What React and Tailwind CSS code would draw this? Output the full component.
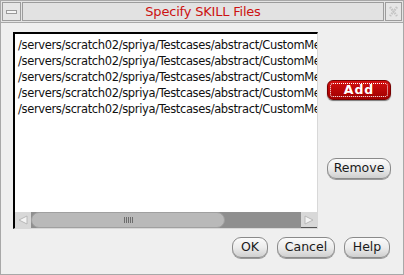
const FILES = Array(5).fill('/servers/scratch02/spriya/Testcases/abstract/CustomMenu.il');

function Btn({ children, w }) {
  return (
    <button
      className={`h-[21px] ${w} rounded-[9px] border border-[#8a8a8a] bg-gradient-to-b from-[#fbfbfb] via-[#ececec] to-[#cfcfcf] text-[12.5px] leading-none text-[#1a1a1a] shadow-[0_1px_0_#9a9a9a]`}
    >
      {children}
    </button>
  );
}

export default function App() {
  return (
    <div
      className="w-[404px] h-[275px] bg-[#efefef] border border-[#a8a8a8] flex flex-col overflow-hidden"
      style={{ fontFamily: '"DejaVu Sans", "Noto Sans", sans-serif' }}
    >
      <div className="h-[22px] flex items-stretch gap-[1px] p-[1px] border-b border-[#a8a8a8] bg-[#e4e4e4]">
        <div className="w-[19px] border border-[#9c9c9c] bg-[#e6e6e6] flex items-center justify-center">
          <div className="w-[11px] h-[4px] border border-[#9a9a9a] bg-[#f6f6f6]" />
        </div>
        <div className="flex-1 border border-[#9c9c9c] bg-[#e2e2e2] flex items-center justify-center text-[13px] tracking-[-0.2px] text-[#cc1111]">
          Specify SKILL Files
        </div>
        <div className="w-[17px] border border-[#9c9c9c] bg-[#e6e6e6] flex items-center justify-center">
          <svg width="11" height="13" viewBox="0 0 11 13">
            <path d="M2 2 L9 11 M9 2 L2 11" stroke="#c4c4c4" strokeWidth="2.5" strokeDasharray="1.5 1" fill="none" />
          </svg>
        </div>
      </div>
      <div className="flex-1 flex pl-[12px] pt-[9px] pr-[12px]">
        <div className="w-[305px] h-[197px] flex flex-col border-t-2 border-l-2 border-t-black border-l-black border-r border-b border-r-[#d8d8d8] border-b-[#d8d8d8] bg-white">
          <div className="flex-1 overflow-hidden pt-[3px] pl-[3px]">
            {FILES.map((f, i) => (
              <div key={i} className="h-[16px] whitespace-nowrap text-[11.5px] tracking-[-0.35px] leading-[16px] text-[#111]">
                {f}
              </div>
            ))}
          </div>
          <div className="h-[16px] flex bg-[#8f8f8f]">
            <div className="w-[16px] bg-[#d8d8d8] flex items-center justify-center">
              <svg width="10" height="10" viewBox="0 0 10 10">
                <polygon points="9,1 9,9 1,5" fill="#f4f4f4" stroke="#b8b8b8" />
              </svg>
            </div>
            <div className="w-[194px] rounded-full bg-[#b9b9b9] border border-[#a0a0a0] flex items-center justify-center">
              <div className="flex gap-[1px]">
                {[0, 1, 2, 3, 4].map((k) => (
                  <div key={k} className="w-[1px] h-[6px] bg-[#6c6c6c]" />
                ))}
              </div>
            </div>
            <div className="flex-1" />
            <div className="w-[16px] bg-[#d8d8d8] border-b border-[#555] flex items-center justify-center">
              <svg width="10" height="10" viewBox="0 0 10 10">
                <polygon points="1,1 1,9 9,5" fill="#f4f4f4" stroke="#b8b8b8" />
              </svg>
            </div>
          </div>
        </div>
        <div className="flex-1 flex flex-col items-end pt-[48px]">
          <button className="w-[64px] h-[20px] rounded-[6px] bg-gradient-to-b from-[#d41010] to-[#a00000] border border-[#700] p-[2px] shadow-[0_1px_1px_#777]">
            <span className="w-full h-full border border-dotted border-white rounded-[3px] flex items-center justify-center text-[12.5px] font-bold tracking-[1px] text-white leading-none">
              Add
            </span>
          </button>
          <div className="mt-[55px]">
            <Btn w="w-[64px]">Remove</Btn>
          </div>
        </div>
      </div>
      <div className="flex justify-end gap-[9px] pr-[13px] pb-[16px]">
        <Btn w="w-[36px]">OK</Btn>
        <Btn w="w-[58px]">Cancel</Btn>
        <Btn w="w-[46px]">Help</Btn>
      </div>
    </div>
  );
}
